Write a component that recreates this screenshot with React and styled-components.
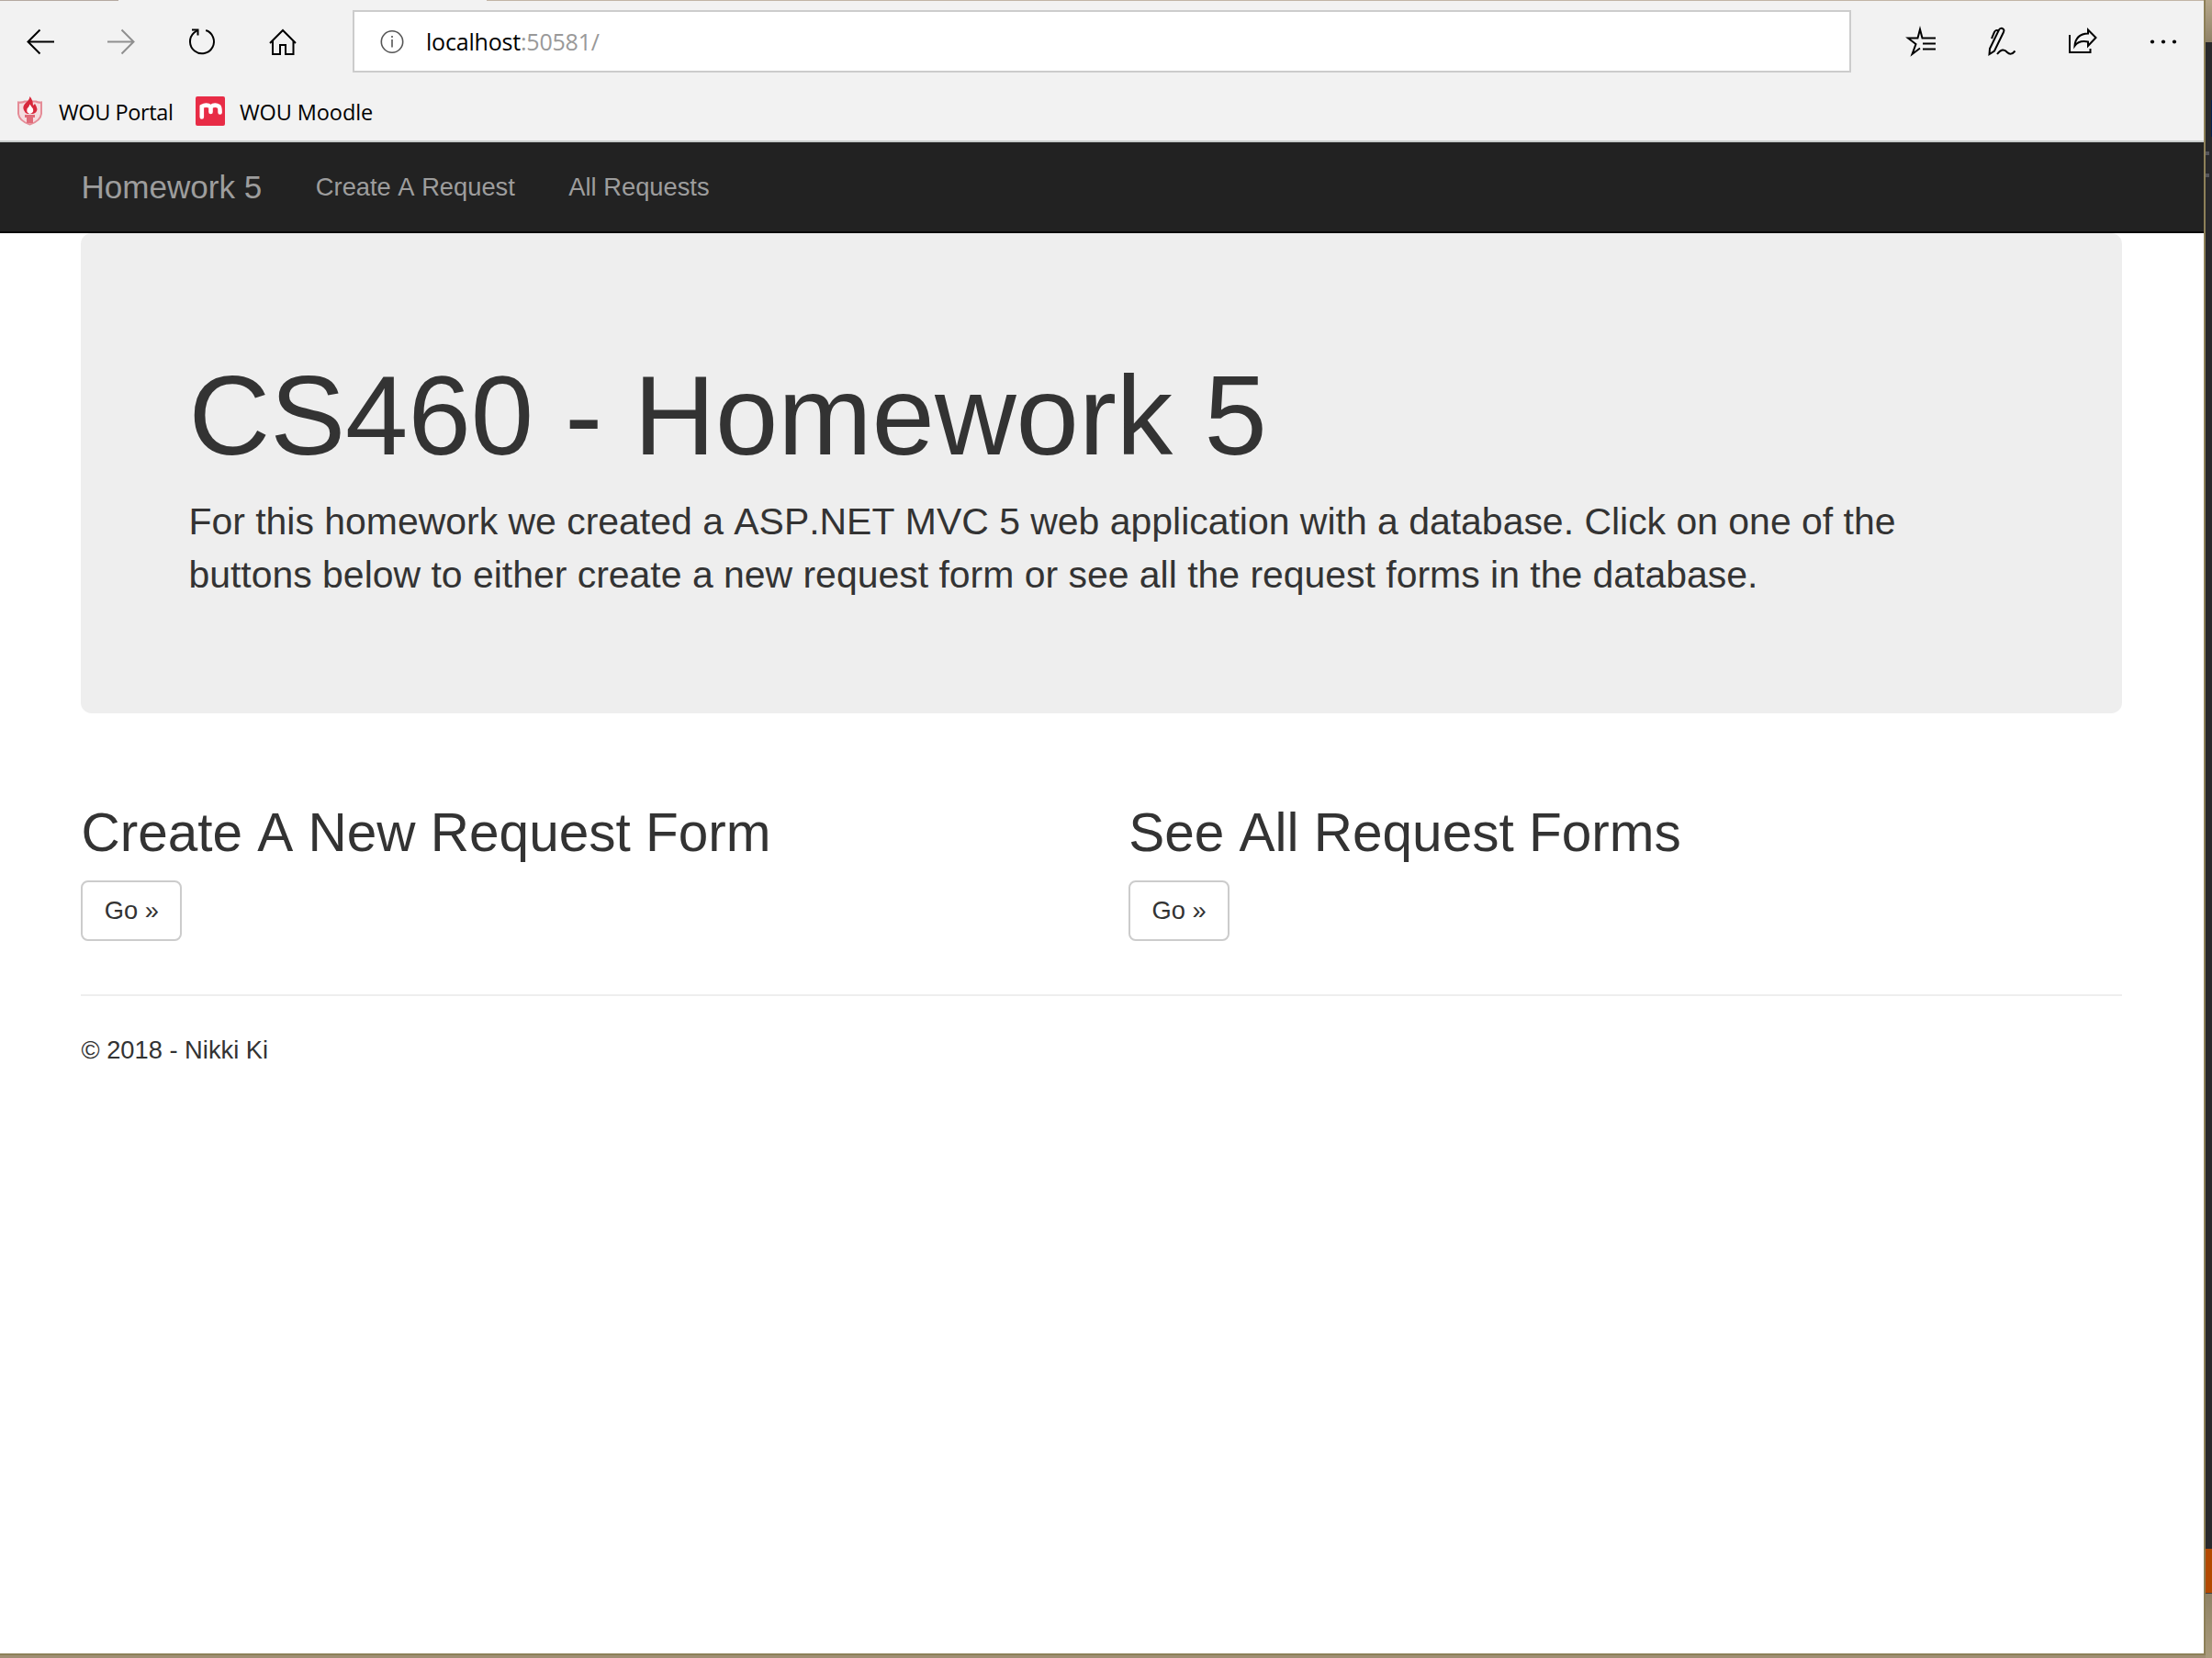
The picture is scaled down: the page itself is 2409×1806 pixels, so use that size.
import React from "react";
import styled, { createGlobalStyle } from "styled-components";

const Global = createGlobalStyle`
  * { box-sizing: border-box; }
  html, body { margin: 0; padding: 0; height: 1806px; overflow: hidden; }
  body { background: #a69675; font-family: "Liberation Sans", Arial, sans-serif; font-size: 27.3px; line-height: 39px; color: #333; font-kerning: none; }
`;

const Desktop = styled.div`
  display: flex;
  width: 2409px;
  height: 1806px;
  background: linear-gradient(#9c8f78, #a08f74);
`;
const Win = styled.div`
  width: 2402px;
  height: 1803px;
  display: flex;
  flex-direction: column;
  background: #fff;
  border-right: 2px solid #8d8058;
  border-bottom: 2px solid #8d8058;
`;
const TabEdge = styled.div`
  display: grid;
  grid-template-columns: 129px 401px 1fr;
  height: 1px;
  flex: none;
  background: #f2f2f2;
`;
const TabGap = styled.div`
  background: ${(p) => p.$color};
`;
const Chrome = styled.header`
  height: 154px;
  flex: none;
  background: #f2f2f2;
  border-bottom: 2px solid #c8cccb;
`;
const Toolbar = styled.div`
  display: flex;
  align-items: center;
  height: 88px;
`;
const IconButton = styled.button`
  display: flex;
  align-items: center;
  justify-content: center;
  width: ${(p) => p.$width || 88}px;
  height: 88px;
  flex: none;
  border: 0;
  padding: 0;
  background: transparent;
  color: ${(p) => (p.$muted ? "#8f8f8f" : "#000")};
`;
const Address = styled.div`
  display: flex;
  align-items: center;
  width: 1632px;
  height: 68px;
  margin: 0 32px;
  padding-left: 28px;
  flex: none;
  background: #fff;
  border: 2px solid #ccc;
`;
const Url = styled.span`
  margin-left: 24px;
  padding-top: 1px;
  font-family: "Open Sans", "Noto Sans", sans-serif;
  font-size: 25px;
  letter-spacing: -0.2px;
  color: #000;
`;
const Port = styled.span`
  color: #999;
`;
const Favorites = styled.nav`
  display: flex;
  align-items: center;
  height: 64px;
`;
const Favorite = styled.a`
  display: flex;
  align-items: center;
  gap: 15px;
  margin-left: ${(p) => p.$offset}px;
  font-family: "Open Sans", "Noto Sans", sans-serif;
  font-size: 23.5px;
  letter-spacing: ${(p) => p.$track}px;
  color: #000;
`;
const FavoriteLabel = styled.span`
  padding: 2px 0 0 ${(p) => p.$indent || 0}px;
`;
const Page = styled.div`
  flex: 1;
  min-height: 0;
  display: flex;
  flex-direction: column;
`;
const Navbar = styled.nav`
  height: 99px;
  flex: none;
  background: #222;
  border-bottom: 2px solid #080808;
`;
const Container = styled.div`
  width: 2281.5px;
  margin: 0 0 0 59.2px;
  padding: 0 29.25px;
`;
const NavRow = styled(Container)`
  display: flex;
  align-items: center;
  height: 97px;
`;
const Brand = styled.a`
  margin-right: 58.5px;
  font-size: 35.1px;
  color: #9d9d9d;
`;
const NavLink = styled.a`
  margin-right: 58.5px;
  color: #9d9d9d;
`;
const Jumbotron = styled.section`
  height: 523px;
  padding: 131.1px 117px 0;
  background: #eee;
  border-radius: 11.7px;
`;
const Title = styled.h1`
  margin: 0 0 20.3px;
  font-size: 122.85px;
  font-weight: 500;
  line-height: 135.1px;
`;
const Lead = styled.p`
  margin: 0;
  font-size: 40.95px;
  font-weight: 200;
  line-height: 57.3px;
`;
const Columns = styled.div`
  display: grid;
  grid-template-columns: 1140.75px 1fr;
  padding: 97.8px 0 58.5px;
`;
const Heading = styled.h2`
  margin: 0 0 19.5px;
  font-size: 58.5px;
  font-weight: 500;
  line-height: 64.35px;
`;
const Button = styled.a`
  display: flex;
  align-items: center;
  justify-content: center;
  width: 110px;
  height: 66px;
  background: #fff;
  border: 2px solid #ccc;
  border-radius: 7.8px;
`;
const Footer = styled.footer`
  border-top: 2px solid #eee;
  padding-top: 39px;
`;

/* Sliver of the window that sits behind the browser */
const Behind = styled.aside`
  width: 7px;
  display: grid;
  grid-template-rows: 46px 1641px 48px 1px 1fr;
`;
const Wall = styled.div`
  background: ${(p) => p.$paint};
`;
const Editor = styled.div`
  display: flex;
  flex-direction: column;
  background: #29292b;
  padding-top: 63px;
`;
const Selection = styled.span`
  align-self: flex-end;
  width: 1px;
  height: 40px;
  margin-bottom: 16px;
  background: #06204c;
`;
const Tick = styled.span`
  width: 4px;
  height: 4px;
  margin-bottom: 20px;
  background: #55555a;
`;

const Icon = ({ w = 32, h = 32, sw = 2, children }) => (
  <svg width={w} height={h} viewBox={`0 0 ${w} ${h}`} fill="none" stroke="currentColor" strokeWidth={sw}>
    {children}
  </svg>
);

const BackIcon = () => (
  <Icon><path d="M31 16.5H2M15.5 3.5L2.5 16.5L15.5 29.5" /></Icon>
);
const ForwardIcon = () => (
  <Icon><path d="M1 16.5H30M16.5 3.5L29.5 16.5L16.5 29.5" /></Icon>
);
const RefreshIcon = () => (
  <Icon>
    <path d="M20.2 4A13 13 0 1 1 7.2 6.7L11 4" />
    <path d="M5 3.5H11.5V9.5" />
  </Icon>
);
const HomeIcon = () => (
  <Icon>
    <path d="M2 18L16 4L30 18M5 15.5V30H13V20H19V30H27.5V15.5" />
  </Icon>
);
const InfoIcon = () => (
  <svg width="26" height="26" viewBox="0 0 26 26" fill="none" stroke="#555" strokeWidth="1.6">
    <circle cx="13" cy="13.5" r="11.7" />
    <path d="M13 11V19.5M13 7V9" />
  </svg>
);
const StarListIcon = () => (
  <Icon w={34} h={34}>
    <path d="M33 13.5H18.5L16 4L13.5 13.5H3L11.500 20L7.500 31L16 24.500" />
    <path d="M19 19.5H33M19 25.5H33" />
  </Icon>
);
const PenIcon = () => (
  <Icon w={32} h={34}>
    <path d="M3 25L13 4.5Q15 1.500 18 4Q19 5 18 7L8 27.500L2.500 31Z" />
    <path d="M13 5.5Q9 4 8 7L5 14" />
    <path d="M11 31Q17 23 22 29Q26 33 30.5 27.5" />
  </Icon>
);
const ShareIcon = () => (
  <Icon w={34} h={34}>
    <path d="M3 10V29H25.5V25" />
    <path d="M23 4.5L31.5 13L23 22V17.5Q13 15.5 8.5 22Q9.5 9 23 8.5Z" />
  </Icon>
);
const MoreIcon = () => (
  <Icon>
    <g fill="currentColor" stroke="none">
      <circle cx="4" cy="16.5" r="2.1" />
      <circle cx="16" cy="16.5" r="2.1" />
      <circle cx="28" cy="16.5" r="2.1" />
    </g>
  </Icon>
);
const CrestLogo = () => (
  <svg width="32" height="32" viewBox="0 0 32 32">
    <path d="M3 6.500Q7 7 10 5.500H22Q25 7 28 6.500V19Q27 27 15.500 30.500Q4 27 3 19Z" fill="#f4dde0" stroke="#e58c97" strokeWidth="2" />
    <path d="M15.500 0Q15 4 11 7Q7 11 9 15Q10 18 13 19H19Q23 18 23.500 14Q23 11 21 8L19 10Q19 4 15.500 0Z" fill="#d8283c" />
    <path d="M15.500 8.500Q15 11 12.500 13.500Q11.500 18 15.500 19Q20 18 19 13.500Q17 11 15.500 8.500Z" fill="#fff" />
    <path d="M10 20H21V23H19V29H12V23H10Z" fill="#e06b79" />
  </svg>
);
const MoodleLogo = () => (
  <svg width="32" height="32" viewBox="0 0 32 32">
    <rect width="32" height="32" rx="2" fill="#e82c46" />
    <path d="M6.8 22.500V11Q12 8 16.500 11.500V17M16.500 11.500Q21 8 25.500 11Q26.600 12 26.600 17.500" fill="none" stroke="#fff" strokeWidth="4.600" strokeLinecap="round" />
  </svg>
);

export default function App() {
  return (
    <Desktop>
      <Global />
      <Win>
        <TabEdge>
          <TabGap $color="#b5a9a0" />
          <TabGap $color="#f2f2f2" />
          <TabGap $color="#c2b5a6" />
        </TabEdge>
        <Chrome>
          <Toolbar>
            <IconButton aria-label="Back"><BackIcon /></IconButton>
            <IconButton aria-label="Forward" $muted><ForwardIcon /></IconButton>
            <IconButton aria-label="Refresh"><RefreshIcon /></IconButton>
            <IconButton aria-label="Home"><HomeIcon /></IconButton>
            <Address>
              <InfoIcon />
              <Url>localhost<Port>:50581/</Port></Url>
            </Address>
            <IconButton aria-label="Favorites" $width={88}><StarListIcon /></IconButton>
            <IconButton aria-label="Notes" $width={88}><PenIcon /></IconButton>
            <IconButton aria-label="Share" $width={87}><ShareIcon /></IconButton>
            <IconButton aria-label="More" $width={89}><MoreIcon /></IconButton>
          </Toolbar>
          <Favorites>
            <Favorite $offset={17} $track={-0.4}><CrestLogo /><FavoriteLabel>WOU Portal</FavoriteLabel></Favorite>
            <Favorite $offset={24.5} $track={-0.1}><MoodleLogo /><FavoriteLabel $indent={1}>WOU Moodle</FavoriteLabel></Favorite>
          </Favorites>
        </Chrome>
        <Page>
          <Navbar>
            <NavRow>
              <Brand>Homework 5</Brand>
              <NavLink>Create A Request</NavLink>
              <NavLink>All Requests</NavLink>
            </NavRow>
          </Navbar>
          <Container>
            <Jumbotron>
              <Title>CS460 - Homework 5</Title>
              <Lead>
                For this homework we created a ASP.NET MVC 5 web application with a database. Click on one of the
                buttons below to either create a new request form or see all the request forms in the database.
              </Lead>
            </Jumbotron>
            <Columns>
              <div>
                <Heading>Create A New Request Form</Heading>
                <Button>Go »</Button>
              </div>
              <div>
                <Heading>See All Request Forms</Heading>
                <Button>Go »</Button>
              </div>
            </Columns>
            <Footer>© 2018 - Nikki Ki</Footer>
          </Container>
        </Page>
      </Win>
      <Behind>
        <Wall $paint="linear-gradient(#b5a68a, #8f8267)" />
        <Editor><Selection /><Tick /><Tick /></Editor>
        <Wall $paint="#b34a00" />
        <Wall $paint="#444" />
        <Wall $paint="linear-gradient(#8f8265, #aa9b7c)" />
      </Behind>
    </Desktop>
  );
}
